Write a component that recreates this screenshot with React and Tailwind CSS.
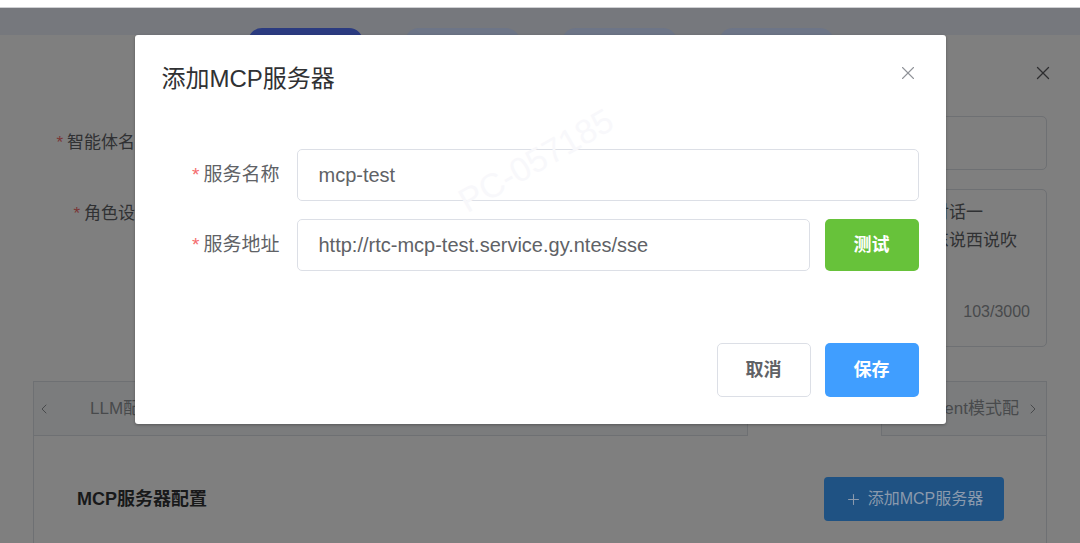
import { X, ChevronLeft, ChevronRight, Plus } from 'lucide-react';

const FONT = "font-['Liberation_Sans','Noto_Sans_CJK_SC',sans-serif]";

// colours of the page behind the dialog, as seen through the modal mask
const HEADER_TABS = ['bg-[#2b3b80]', 'bg-[#6d7587]', 'bg-[#6d7587]', 'bg-[#6d7587]'];

const Star = ({ className }) => <span className={`${className} mr-[4px]`}>*</span>;

// the drawer that sits behind the dialog
const AgentDrawer = () => (
  <div className="flex flex-col h-[535px] bg-[#7f7f7f]">
    <div className="h-[27px] shrink-0 bg-[#76787d] overflow-hidden flex gap-[42px] pl-[248px]">
      {HEADER_TABS.map((c, i) => (
        <div key={i} className={`w-[115px] h-[34px] mt-[20px] shrink-0 rounded-[14px] ${c}`} />
      ))}
    </div>

    <div className="flex-1 flex flex-col">
      <div className="h-[81px] flex justify-end items-start pt-[27px] pr-[26px]">
        <X className="w-[22px] h-[22px] text-[#2e2e30]" strokeWidth={1.4} />
      </div>

      <div className="flex items-center pr-[33px]">
        <label className="w-[168px] pr-[16px] text-right text-[17px] text-[#303133] whitespace-nowrap">
          <Star className="text-[#7b3636]" />智能体名称
        </label>
        <div className="flex-1 h-[54px] border border-[#6e7073] rounded-[5px]" />
      </div>

      <div className="flex items-start pr-[33px] mt-[19px]">
        <label className="w-[168px] pr-[16px] text-right text-[17px] text-[#303133] whitespace-nowrap pt-[12px]">
          <Star className="text-[#7b3636]" />角色设定
        </label>
        <div className="flex-1 min-w-0 h-[158px] border border-[#6e7073] rounded-[5px] flex flex-col px-[15px] pt-[9px] pb-[22px] overflow-hidden">
          <div className="text-[17px] leading-[28px] text-[#303133] whitespace-nowrap">
            <p>你是一个智能语音助手，名字叫小易，请始终使用简洁、自然、亲切的口语风格与用户友好进行多轮对话一</p>
            <p>般每次回复不超过三句话，回答要直接明确、重点突出，请避免长篇大论，也千万不要东拉西扯、说东说西说吹</p>
          </div>
          <div className="mt-auto text-right text-[16px] text-[#484a4c] pr-[1px]">103/3000</div>
        </div>
      </div>

      <div className="mx-[33px] mt-[34px] border border-[#6e7073] border-b-0 flex-1 flex flex-col">
        <div className="h-[54px] flex bg-[#7b7c7d]">
          <div className="w-[20px] flex items-center justify-center text-[#484a4c] border-b border-[#6e7073]">
            <ChevronLeft className="w-[16px] h-[16px]" strokeWidth={1.5} />
          </div>
          <div className="flex-1 flex overflow-hidden">
            <div className="w-[693px] shrink-0 flex items-center pl-[36px] text-[17px] text-[#484a4c] border-b border-[#6e7073]">
              LLM配置
            </div>
            <div className="w-[135px] shrink-0 flex items-center justify-center text-[17px] text-[#204f80] bg-[#7f7f7f] border-x border-[#6e7073]">
              MCP配置
            </div>
            <div className="flex-1 flex items-center justify-end overflow-hidden border-b border-[#6e7073]">
              <span className="text-[17px] text-[#484a4c] whitespace-nowrap shrink-0 mr-[-17px]">Agent模式配置</span>
            </div>
          </div>
          <div className="w-[27px] flex items-center justify-center text-[#484a4c] border-b border-[#6e7073]">
            <ChevronRight className="w-[16px] h-[16px]" strokeWidth={1.5} />
          </div>
        </div>

        <div className="flex items-center justify-between pl-[43px] pr-[42px] pt-[41px]">
          <span className="text-[18px] font-semibold text-[#18191a]">MCP服务器配置</span>
          <button className="w-[180px] h-[44px] rounded-[4px] bg-[#1f5283] text-[#8b9aad] text-[16px] flex items-center justify-center gap-[6px]">
            <Plus className="w-[17px] h-[17px]" strokeWidth={1.5} />
            添加MCP服务器
          </button>
        </div>
      </div>
    </div>
  </div>
);

const AddServerDialog = () => (
  <div className="relative w-[811px] h-[389px] bg-white rounded-[3px] shadow-[0_1px_3px_rgba(0,0,0,0.3)] px-[27px] pt-[29px] overflow-hidden">
    <div className="flex justify-between items-start">
      <h3 className="text-[24px] leading-[30px] text-[#303133]">添加MCP服务器</h3>
      <X className="w-[22px] h-[22px] text-[#909399] -mt-[2px]" strokeWidth={1.2} />
    </div>

    <div className="mt-[55px] flex flex-col gap-[18px]">
      <div className="flex items-center">
        <label className="w-[135px] shrink-0 pr-[17px] text-right text-[19px] text-[#606266] whitespace-nowrap">
          <Star className="text-[#f56c6c]" />服务名称
        </label>
        <div className="flex-1 h-[52px] border border-[#dcdfe6] rounded-[5px] flex items-center px-[21px] text-[20px] text-[#606266]">
          mcp-test
        </div>
      </div>
      <div className="flex items-center">
        <label className="w-[135px] shrink-0 pr-[17px] text-right text-[19px] text-[#606266] whitespace-nowrap">
          <Star className="text-[#f56c6c]" />服务地址
        </label>
        <div className="flex-1 h-[52px] border border-[#dcdfe6] rounded-[5px] flex items-center px-[21px] text-[20px] text-[#606266] whitespace-nowrap overflow-hidden">
          http://rtc-mcp-test.service.gy.ntes/sse
        </div>
        <button className="ml-[15px] shrink-0 w-[94px] h-[52px] rounded-[5px] bg-[#67c23a] text-white text-[18px] font-semibold">
          测试
        </button>
      </div>
    </div>

    <div className="mt-[72px] flex justify-end gap-[14px]">
      <button className="w-[94px] h-[54px] rounded-[5px] border border-[#dcdfe6] bg-white text-[18px] font-semibold text-[#606266]">
        取消
      </button>
      <button className="w-[94px] h-[54px] rounded-[5px] bg-[#409eff] text-white text-[18px] font-semibold">
        保存
      </button>
    </div>

    <span className="absolute left-[315px] top-[100px] -rotate-[30deg] text-[34px] text-[#f8f8fb] pointer-events-none select-none">
      PC-057185
    </span>
  </div>
);

export default function App() {
  return (
    <div className={`w-[1080px] h-[543px] overflow-hidden bg-[#7f7f7f] ${FONT}`}>
      <div className="h-[8px] bg-white border-b border-[#cfd0d3]" />
      <div className="relative">
        <AgentDrawer />
        <div className="absolute top-0 left-0 w-[1080px] flex justify-center pt-[27px]">
          <AddServerDialog />
        </div>
      </div>
    </div>
  );
}
